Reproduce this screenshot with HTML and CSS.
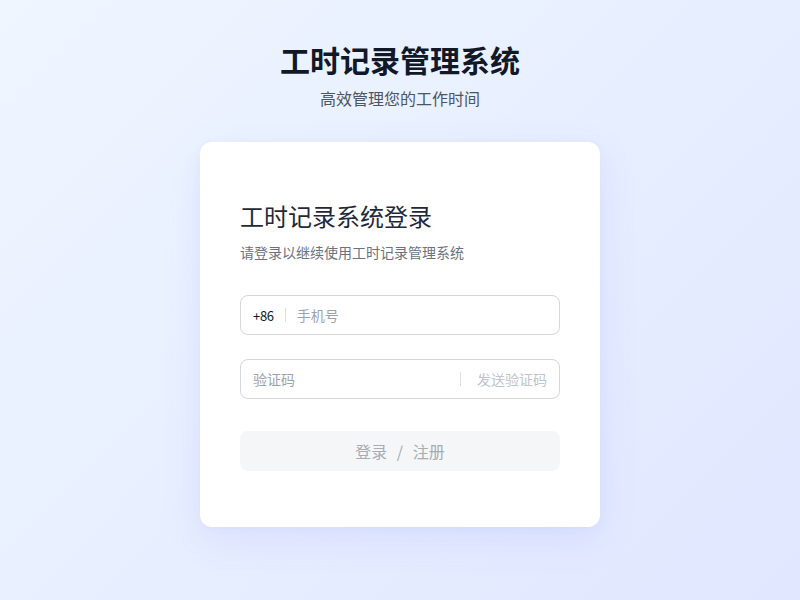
FILE: index.html
```html
<!DOCTYPE html>
<html lang="zh-CN">
<head>
<meta charset="utf-8">
<title>工时记录管理系统</title>
<link rel="stylesheet" href="styles.css">
</head>
<body>
<div class="page">
  <header class="brand">
    <h1 class="brand-title">工时记录管理系统</h1>
    <p class="brand-sub">高效管理您的工作时间</p>
  </header>
  <main class="card">
    <h2 class="card-title">工时记录系统登录</h2>
    <p class="card-sub">请登录以继续使用工时记录管理系统</p>
    <form class="form">
      <label class="field">
        <span class="prefix">+86</span>
        <span class="divider"></span>
        <input class="input" type="text" placeholder="手机号">
      </label>
      <label class="field">
        <input class="input" type="text" placeholder="验证码">
        <span class="divider"></span>
        <span class="send">发送验证码</span>
      </label>
      <button class="submit" type="button" disabled>登录 / 注册</button>
    </form>
  </main>
</div>
</body>
</html>
```

FILE: styles.css
```css
* { box-sizing: border-box; }
html, body { margin: 0; padding: 0; }
body {
  width: 800px;
  height: 600px;
  overflow: hidden;
  font-family: "Noto Sans CJK SC", "Noto Sans", sans-serif;
  background: linear-gradient(135deg, #eff6ff 0%, #e0e7ff 100%);
}
.page {
  display: flex;
  flex-direction: column;
  align-items: center;
  padding-top: 38px;
}
.brand { text-align: center; }
.brand-title {
  margin: 0;
  font-size: 30px;
  line-height: 42px;
  font-weight: 700;
  color: #111827;
}
.brand-sub {
  margin: 6px 0 0;
  font-size: 16px;
  line-height: 24px;
  color: #4b5563;
}
.card {
  margin-top: 32px;
  width: 400px;
  background: #fff;
  border-radius: 12px;
  padding: 56px 40px 56px;
  box-shadow: 0 12px 40px rgba(99, 102, 241, 0.10), 0 2px 8px rgba(99, 102, 241, 0.04);
}
.card-title {
  margin: 0;
  font-size: 24px;
  line-height: 36px;
  font-weight: 400;
  color: #1f2937;
}
.card-sub {
  margin: 7px 0 0;
  font-size: 14px;
  line-height: 22px;
  color: #6b7280;
}
.form {
  margin-top: 32px;
  display: flex;
  flex-direction: column;
  gap: 24px;
}
.field {
  display: flex;
  align-items: center;
  height: 40px;
  border: 1px solid #d4d6db;
  border-radius: 8px;
  padding: 0 12px;
}
.prefix {
  font-size: 13px;
  letter-spacing: -0.3px;
  color: #111827;
}
.divider {
  width: 1px;
  height: 14px;
  background: #dcdfe6;
  margin: 0 11px;
}
.input {
  flex: 1;
  min-width: 0;
  border: 0;
  outline: 0;
  padding: 0;
  font: inherit;
  font-size: 14px;
  color: #111827;
  background: transparent;
}
.input::placeholder { color: #9ca3af; }
.send {
  font-size: 14px;
  color: #c0c4cc;
  margin-left: 5px;
}
.submit {
  margin-top: 8px;
  height: 40px;
  border: 0;
  border-radius: 8px;
  background: #f5f6f8;
  color: #a8abb2;
  font: inherit;
  font-size: 16px;
  word-spacing: 6px;
}
```
